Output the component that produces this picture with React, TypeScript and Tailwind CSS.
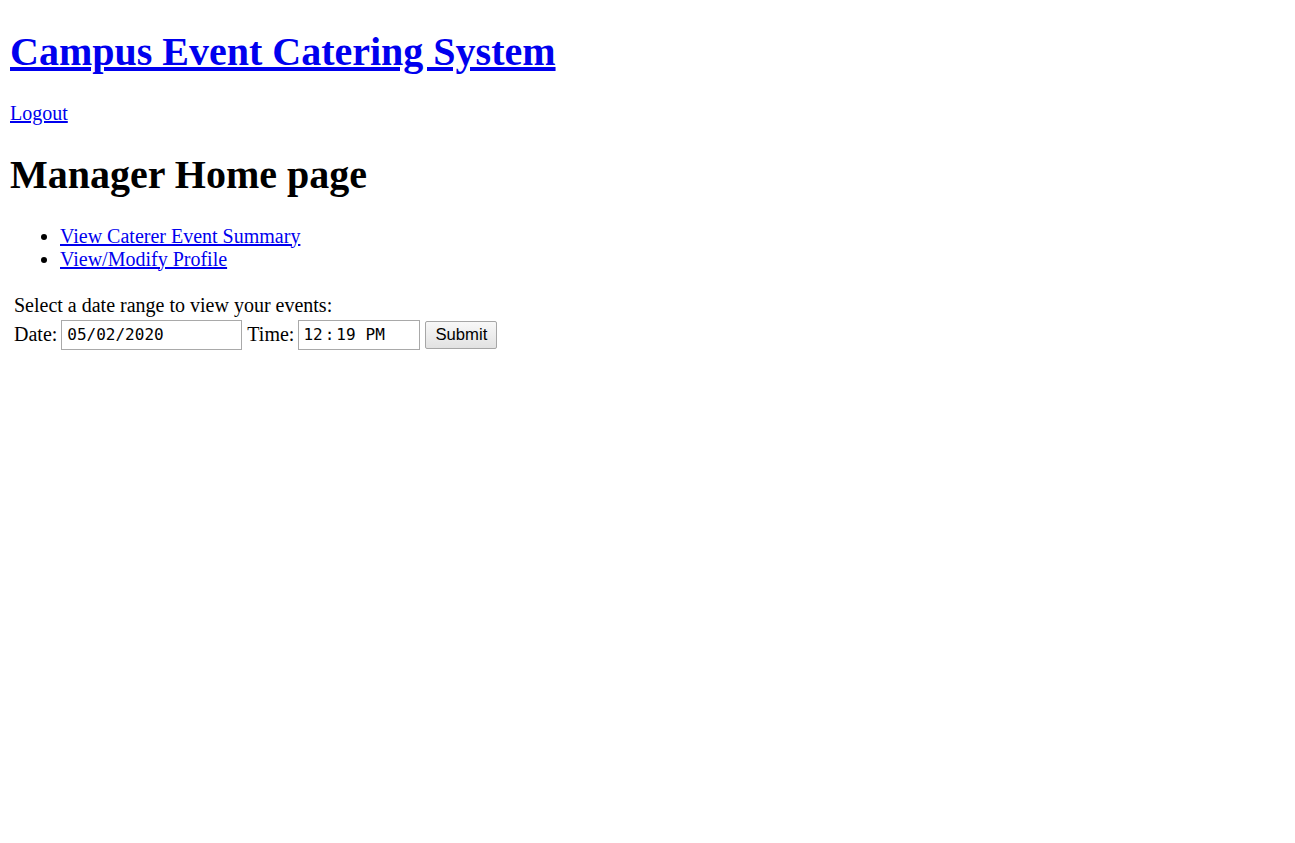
import React from 'react';

const linkCls = 'text-[#0000ee] underline';

export default function App() {
  return (
    <div className="min-h-screen bg-white px-[10px] pt-[28.5px] text-black font-['Liberation_Serif',serif] text-[20px] leading-[23px]">
      <h1 className="text-[40px] leading-[46px] font-bold">
        <a href="#" className={linkCls}>Campus Event Catering System</a>
      </h1>

      <div className="mt-[27px]">
        <a href="#" className={linkCls}>Logout</a>
      </div>

      <h1 className="mt-[27px] text-[40px] leading-[46px] font-bold">Manager Home page</h1>

      <ul className="mt-[27px] pl-[50px] list-disc">
        <li><a href="#" className={linkCls}>View Caterer Event Summary</a></li>
        <li><a href="#" className={linkCls}>View/Modify Profile</a></li>
      </ul>

      <form className="mt-[23px] pl-[4px]" onSubmit={e => e.preventDefault()}>
        <div>Select a date range to view your events:</div>
        <div className="mt-[3.5px] flex items-center h-[30px]">
          <span className="mb-[1px]">Date:</span>
          <div className="ml-[4px] w-[181px] h-[30px] border border-[#a9a9a9] flex items-center pl-[5px] pb-[1px] font-['DejaVu_Sans_Mono',monospace] text-[16px] text-black">
            05/02/2020
          </div>
          <span className="ml-[5px] mb-[1px]">Time:</span>
          <div className="ml-[4px] w-[122px] h-[30px] border border-[#a9a9a9] flex items-center pl-[4px] pb-[1px] font-['DejaVu_Sans_Mono',monospace] text-[16px] text-black whitespace-pre">
            <span>12</span>
            <span className="mx-[2px]">:</span>
            <span>19</span>
            <span className="ml-[10px]">PM</span>
          </div>
          <button
            type="submit"
            className="ml-[5px] w-[72px] h-[28px] border border-[#a6a6a6] rounded-[2px] bg-gradient-to-b from-[#f8f8f8] to-[#e2e2e2] font-['Liberation_Sans',Arial,sans-serif] text-[16.67px] leading-none text-black"
          >
            Submit
          </button>
        </div>
      </form>
    </div>
  );
}
